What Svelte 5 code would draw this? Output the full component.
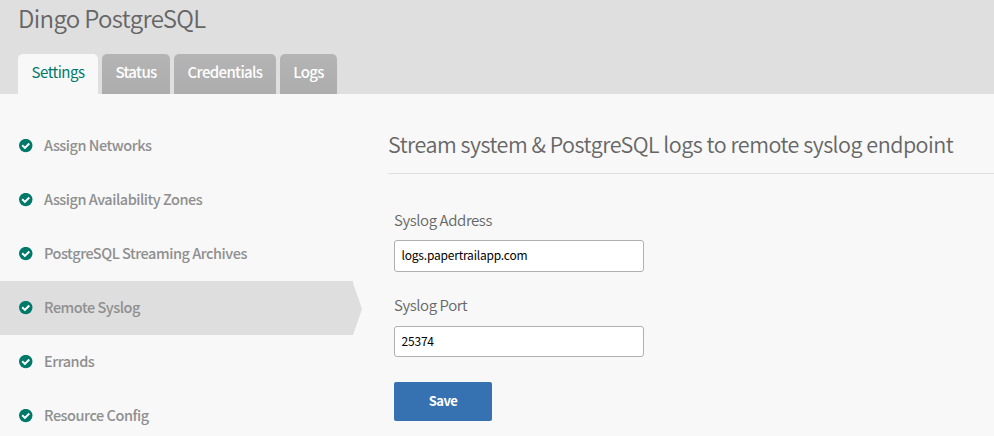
<script>
  const tabs = [
    { label: 'Settings', width: 80, active: true },
    { label: 'Status', width: 68 },
    { label: 'Credentials', width: 102 },
    { label: 'Logs', width: 57 }
  ];
  const sections = [
    'Assign Networks',
    'Assign Availability Zones',
    'PostgreSQL Streaming Archives',
    'Remote Syslog',
    'Errands',
    'Resource Config'
  ];
  let current = $state('Remote Syslog');
  let address = $state('logs.papertrailapp.com');
  let port = $state('25374');
</script>

<div class="page">
  <header>
    <h1>Dingo PostgreSQL</h1>
    <nav class="tabs">
      {#each tabs as tab}
        <a class="tab" class:active={tab.active} style="width: {tab.width}px">{tab.label}</a>
      {/each}
    </nav>
  </header>

  <div class="body">
    <ul class="sections">
      {#each sections as name}
        <li class:current={name === current}>
          <svg class="check" viewBox="0 0 14 14" width="14" height="14">
            <circle cx="6.75" cy="6.6" r="6.75" fill="#00796b" />
            <path d="M3.2 6.3 L5.9 8.9 L10.3 4.5" fill="none" stroke="#fff" stroke-width="2" />
          </svg>
          <span>{name}</span>
          {#if name === current}
            <svg class="arrow" viewBox="0 0 9 54" width="9" height="54">
              <path d="M0 2 L9 28 L0 54 Z" fill="#dedede" />
            </svg>
          {/if}
        </li>
      {/each}
    </ul>

    <main>
      <h2>Stream system &amp; PostgreSQL logs to remote syslog endpoint</h2>
      <form>
        <label for="address">Syslog Address</label>
        <input id="address" class="address" type="text" bind:value={address} />
        <label for="port" class="second">Syslog Port</label>
        <input id="port" class="port" type="text" bind:value={port} />
        <button type="button">Save</button>
      </form>
    </main>
  </div>
</div>

<style>
  :global(body) {
    background: #f8f8f8;
  }
  .page {
    height: 436px;
    overflow: hidden;
    background: #f8f8f8;
    color: #666;
    font-family: 'Noto Sans CJK SC', 'Noto Sans', sans-serif;
  }
  header {
    box-sizing: border-box;
    height: 94px;
    padding-left: 18px;
    background: #dfdfdf;
  }
  h1 {
    margin: 0;
    height: 54px;
    font-size: 24px;
    font-weight: 350;
    letter-spacing: -0.65px;
    line-height: 36px;
  }
  .tabs {
    display: flex;
    gap: 4px;
  }
  .tab {
    box-sizing: border-box;
    height: 40px;
    border-radius: 5px 5px 0 0;
    background: linear-gradient(#b4b4b4, #adadad);
    color: #fff;
    font-size: 15px;
    font-weight: 500;
    letter-spacing: -0.65px;
    line-height: 36px;
    text-align: center;
    white-space: nowrap;
  }
  .tab.active {
    background: #f8f8f8;
    color: #00796b;
    font-weight: 400;
    letter-spacing: -0.5px;
  }
  .body {
    display: flex;
    height: 342px;
  }
  .sections {
    flex: none;
    width: 353px;
    margin: 0;
    padding: 25px 0 0;
    list-style: none;
  }
  li {
    position: relative;
    display: flex;
    align-items: center;
    box-sizing: border-box;
    height: 54px;
    padding-left: 19px;
    color: #8f8f8f;
    font-size: 14.5px;
    font-weight: 500;
    letter-spacing: -0.47px;
    line-height: 52px;
  }
  li span {
    height: 54px;
  }
  .current {
    background: #dedede;
  }
  .check {
    flex: none;
    margin-right: 11px;
  }
  .arrow {
    position: absolute;
    left: 100%;
    top: 0;
  }
  main {
    flex: 1;
    margin-left: 35px;
    padding-top: 23px;
  }
  h2 {
    box-sizing: border-box;
    height: 57px;
    margin: 0;
    border-bottom: 1px solid #e0e0e0;
    font-size: 21.5px;
    font-weight: 350;
    letter-spacing: -0.5px;
    line-height: 54px;
    white-space: nowrap;
  }
  form {
    display: flex;
    flex-direction: column;
    align-items: flex-start;
    padding: 31px 0 0 6px;
  }
  label {
    height: 35px;
    font-size: 15px;
    font-weight: 350;
    letter-spacing: -0.4px;
    line-height: 30px;
  }
  .second {
    height: 36px;
    margin-top: 18px;
  }
  input {
    box-sizing: border-box;
    width: 250px;
    margin: 0;
    padding: 0 6.5px 3px;
    border: 1px solid #b0b0b0;
    border-radius: 3px;
    outline: none;
    background: #fff;
    color: #000;
    font-family: inherit;
    font-size: 12px;
    font-weight: 400;
    letter-spacing: -0.2px;
  }
  .address {
    height: 32px;
  }
  .port {
    height: 31px;
  }
  button {
    width: 98px;
    height: 39px;
    margin-top: 25px;
    padding: 0 0 3px;
    border: 0;
    border-radius: 2px;
    background: #3672b2;
    color: #fff;
    font-family: inherit;
    font-size: 13px;
    font-weight: 700;
    letter-spacing: -0.5px;
  }
</style>
